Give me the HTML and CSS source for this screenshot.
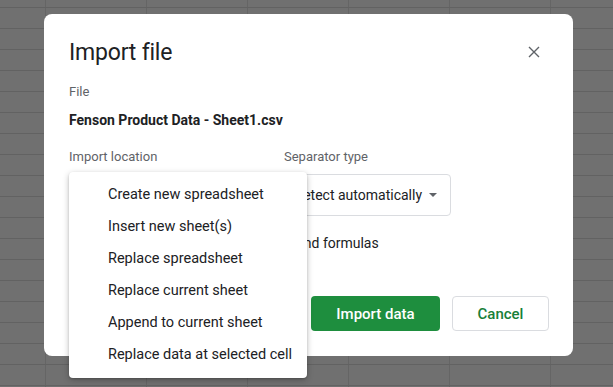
FILE: index.html
```html
<!DOCTYPE html>
<html>
<head>
<meta charset="utf-8">
<link rel="stylesheet" href="styles.css">
</head>
<body>
<div class="backdrop">
  <div class="dialog">
    <div class="head">
      <h1 class="title">Import file</h1>
      <button class="close" aria-label="Close">
        <svg width="14" height="14" viewBox="0 0 14 14"><path d="M2 2L12 12M12 2L2 12" stroke="#5f6368" stroke-width="1.4" fill="none"/></svg>
      </button>
    </div>
    <div class="label file-label">File</div>
    <div class="filename">Fenson Product Data - Sheet1.csv</div>
    <div class="fields">
      <div class="field">
        <div class="label">Import location</div>
        <div class="select wide"><span class="covered">Create new spreadsheet</span><span class="caret"></span></div>
        <div class="menu">
          <div class="item">Create new spreadsheet</div>
          <div class="item">Insert new sheet(s)</div>
          <div class="item">Replace spreadsheet</div>
          <div class="item">Replace current sheet</div>
          <div class="item">Append to current sheet</div>
          <div class="item">Replace data at selected cell</div>
        </div>
      </div>
      <div class="field">
        <div class="label">Separator type</div>
        <div class="select"><span>Detect automatically</span><span class="caret"></span></div>
      </div>
    </div>
    <label class="check"><span class="box"></span><span>Convert text to numbers, dates, and formulas</span></label>
    <div class="actions">
      <button class="btn primary">Import data</button>
      <button class="btn secondary">Cancel</button>
    </div>
  </div>
</div>
</body>
</html>
```
FILE: styles.css
```css
* { box-sizing: border-box; }
html, body { margin: 0; padding: 0; }
body {
  width: 613px;
  height: 387px;
  overflow: hidden;
  font-family: Roboto, "Liberation Sans", sans-serif;
  background-color: #707070;
  background-image:
    repeating-linear-gradient(to bottom, transparent 0, transparent 7px, #626262 7px, #626262 8px, transparent 8px, transparent 21px),
    repeating-linear-gradient(to right, transparent 0, transparent 43px, #656565 43px, #656565 44px, transparent 44px, transparent 101px);
  background-position: 0 0, 2px 0;
}
.backdrop {
  padding: 14px 40px 0 44px;
}
.dialog {
  width: 529px;
  height: 342px;
  background: #fff;
  border-radius: 8px;
  padding: 22px 24px 0 25px;
  display: flex;
  flex-direction: column;
}
.head {
  display: flex;
  justify-content: space-between;
  align-items: center;
  height: 32px;
}
.title {
  margin: 0;
  font-family: Roboto, sans-serif;
  font-weight: 400;
  font-size: 23px;
  color: #202124;
  letter-spacing: -0.2px;
}
.close {
  border: 0;
  background: none;
  padding: 0;
  width: 14px;
  height: 14px;
  margin-right: 8px;
  display: flex;
}
.label {
  font-size: 13px;
  color: #5f6368;
  line-height: 16px;
}
.file-label { margin-top: 16px; }
.filename {
  margin-top: 12px;
  font-size: 14px;
  font-weight: 700;
  color: #202124;
  line-height: 16px;
}
.fields {
  margin-top: 21px;
  display: flex;
  gap: 18px;
}
.field {
  position: relative;
  display: flex;
  flex-direction: column;
  gap: 9px;
}
.select {
  height: 42px;
  width: 167px;
  border: 1px solid #dadce0;
  border-radius: 4px;
  display: flex;
  align-items: center;
  justify-content: space-between;
  padding: 0 13px 0 9px;
  font-size: 14px;
  color: #202124;
}
.select.wide { width: 197px; }
.covered { visibility: hidden; }
.caret {
  width: 0; height: 0;
  border-left: 4px solid transparent;
  border-right: 4px solid transparent;
  border-top: 4px solid #5f6368;
}
.menu {
  position: absolute;
  left: 0;
  top: 23px;
  width: 238px;
  background: #fff;
  border-radius: 4px;
  padding: 7px 0;
  box-shadow: 0 2px 6px rgba(0,0,0,0.25), 0 1px 2px rgba(0,0,0,0.15);
  z-index: 5;
}
.item {
  height: 32px;
  line-height: 32px;
  padding-left: 39px;
  font-size: 14.5px;
  color: #202124;
}
.check {
  margin-top: 18px;
  display: flex;
  align-items: center;
  gap: 12px;
  font-size: 14px;
  color: #202124;
}
.box {
  width: 18px;
  height: 18px;
  border: 2px solid #5f6368;
  border-radius: 2px;
}
.actions {
  margin-top: 44px;
  display: flex;
  justify-content: flex-end;
  gap: 12px;
}
.btn {
  height: 35px;
  border-radius: 4px;
  font-family: Roboto, sans-serif;
  font-size: 15px;
  font-weight: 500;
  padding: 0;
}
.primary {
  width: 129px;
  background: #1e8e3e;
  color: #fff;
  border: 0;
}
.secondary {
  width: 97px;
  background: #fff;
  color: #188038;
  border: 1px solid #dadce0;
}
```
